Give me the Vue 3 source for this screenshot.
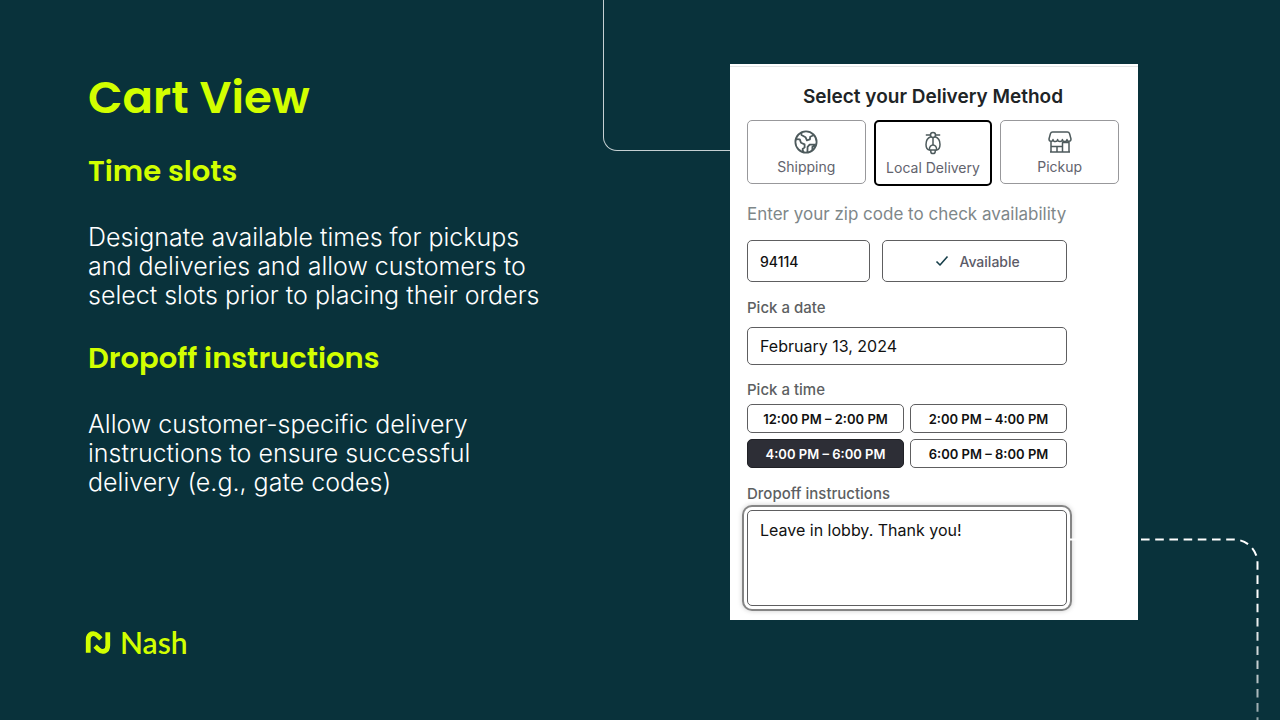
<script setup>
import { ref } from 'vue'

const method = ref('local')
const zip = ref('94114')
const date = ref('February 13, 2024')
const slots = ['12:00 PM – 2:00 PM', '2:00 PM – 4:00 PM', '4:00 PM – 6:00 PM', '6:00 PM – 8:00 PM']
const slot = ref(slots[2])
const notes = ref('Leave in lobby. Thank you!')
</script>

<template>
  <main class="slide">
    <section class="copy">
      <h1>Cart View</h1>
      <h2>Time slots</h2>
      <p>Designate available times for pickups and deliveries and allow customers to select slots prior to placing their orders</p>
      <h2>Dropoff instructions</h2>
      <p class="narrow">Allow customer-specific delivery instructions to ensure successful delivery (e.g., gate codes)</p>
      <div class="brand">
        <svg viewBox="0 0 26 24" width="26" height="23" aria-hidden="true">
          <path d="M2.8 22.6V9C2.8 2.4 8.8 1 12.6 4.8L16 8.2M23.2 1.4V15C23.2 21.6 17.2 23 13.4 19.2L10 15.8" />
        </svg>
        <span>Nash</span>
      </div>
    </section>

    <section class="card">
      <span class="link-line" aria-hidden="true"></span>
      <h3>Select your Delivery Method</h3>
      <div class="methods">
        <button type="button" :class="{ active: method === 'shipping' }" @click="method = 'shipping'">
          <svg viewBox="0 0 24 24" width="24" height="24" aria-hidden="true" stroke-width="1.8">
            <circle cx="12" cy="12" r="10.6" />
            <path d="M7.5 2.6V5l4 2.2 1.4 3.2 3-1 .3-2.6 3.4-1.6M1.6 9.2l4.2.2 1.2 3.4 3.6 1.6v3l-2 1.6.6 3.2M13.4 22.2l.2-5.4 2-2.2h6.2M18.4 20v-3.2l3-1.2" />
          </svg>
          <span>Shipping</span>
        </button>
        <button type="button" :class="{ active: method === 'local' }" @click="method = 'local'">
          <svg viewBox="0 0 24 24" width="24" height="24" aria-hidden="true" stroke-width="1.5">
            <path d="M4.800 4h4.700M14.500 4h4.700M9.800 5.800C6.400 7 5 9.600 5 13.400c0 3.400 1 5.200 3.800 5.600M14.200 5.800C17.600 7 19 9.600 19 13.400c0 3.400-1 5.200-3.800 5.600M12 6.600v7.400" />
            <circle cx="12" cy="4" r="2.500" />
            <path d="M8.400 19c-.6-6.600 7.800-6.600 7.200 0zM9.800 19v1.800c0 2.400 4.400 2.400 4.400 0V19" />
          </svg>
          <span>Local Delivery</span>
        </button>
        <button type="button" :class="{ active: method === 'pickup' }" @click="method = 'pickup'">
          <svg viewBox="0 0 24 24" width="24" height="24" aria-hidden="true" stroke-width="1.5">
            <path d="M4.600 2h14.800c1.200 0 1.800.6 2.200 1.800L23 9c0 3-4 3-4 .6 0 2.600-4.600 2.600-4.600 0 0 2.600-4.800 2.600-4.800 0 0 2.600-4.600 2.600-4.600 0 0 2.400-4 2.400-4-.6l1.400-5.200C2.800 2.600 3.400 2 4.600 2zM3 11.400V22M21 11.400V22M2 22h20M14.500 22v-9.500H21M3 16.500h11.500M9 16.500V22" />
          </svg>
          <span>Pickup</span>
        </button>
      </div>

      <form class="fields" @submit.prevent>
        <label class="hint" for="zip">Enter your zip code to check availability</label>
        <div class="zip-row">
          <input id="zip" v-model="zip" type="text" />
          <button type="button">
            <svg viewBox="0 0 14 14" width="14" height="14" aria-hidden="true" stroke-width="1.6"><path d="M1.500 7.500 5 11l7.500-8.500" /></svg>
            <span>Available</span>
          </button>
        </div>
        <label for="date">Pick a date</label>
        <input id="date" v-model="date" class="date" type="text" />
        <span id="time-label" class="label">Pick a time</span>
        <div class="slots" role="group" aria-labelledby="time-label">
          <button v-for="s in slots" :key="s" type="button" :class="{ chosen: s === slot }" @click="slot = s">{{ s }}</button>
        </div>
        <label for="notes">Dropoff instructions</label>
        <textarea id="notes" v-model="notes"></textarea>
      </form>

      <svg class="dashes" viewBox="0 0 190 184" width="190" height="184" aria-hidden="true">
        <defs>
          <linearGradient id="fade" gradientUnits="userSpaceOnUse" x1="0" y1="60" x2="0" y2="200">
            <stop offset="0" stop-color="#fff" />
            <stop offset="1" stop-color="#fff" stop-opacity=".5" />
          </linearGradient>
        </defs>
        <path d="M0 2.500H164A23.500 23.500 0 0 1 187.500 26V184" stroke="url(#fade)" />
      </svg>
    </section>
  </main>
</template>

<style>
body {
  margin: 0;
  background: #09323b;
}
</style>

<style scoped>
* {
  box-sizing: border-box;
}
.slide {
  display: grid;
  grid-template-columns: minmax(0, 1fr) minmax(320px, 408px);
  gap: 24px;
  align-items: start;
  min-height: 100vh;
  padding: 64px 142px 56px 88px;
  overflow: hidden;
  background: #09323b;
  font-family: Inter, "Liberation Sans", sans-serif;
}
h1, h2, h3, p {
  margin: 0;
}
h1, h2 {
  color: #d2ff00;
  font-family: Poppins, Inter, sans-serif;
}
h1 {
  font-size: 45px;
  font-weight: 600;
  line-height: 68px;
}
h2 {
  margin-top: 18px;
  font-size: 29px;
  font-weight: 600;
  line-height: 42px;
}
p {
  max-width: 464px;
  margin-top: 31px;
  padding-bottom: 9px;
  color: #fff;
  font-size: 25px;
  font-weight: 300;
  line-height: 29px;
}
.narrow {
  max-width: 410px;
}
.brand {
  display: flex;
  align-items: center;
  gap: 9px;
  margin-top: 116px;
  margin-left: -3px;
  color: #d2ff00;
  font-family: Lato, sans-serif;
  font-size: 30px;
  font-weight: 600;
  line-height: 40px;
}
svg {
  flex: none;
  fill: none;
  stroke: currentColor;
  stroke-linejoin: round;
}
.brand svg {
  stroke-width: 5;
  stroke-linejoin: miter;
}
.card {
  position: relative;
  padding: 19px 19px 14px 17px;
  background: linear-gradient(#fff 2px, #e4e6e6 2px, #e4e6e6 3px, #fff 3px);
}
h3 {
  color: #202426;
  font-size: 19px;
  font-weight: 600;
  line-height: 28px;
  text-align: center;
}
button, input, textarea {
  display: block;
  width: 100%;
  margin: 0;
  border: 1px solid #5e5e60;
  border-radius: 5px;
  background: #fff;
  color: #111;
  font-family: inherit;
}
button {
  padding: 0;
  cursor: pointer;
}
.methods {
  display: grid;
  grid-template-columns: repeat(3, 1fr);
  align-items: start;
  gap: 8px;
  margin-top: 9px;
}
.methods button {
  display: flex;
  flex-direction: column;
  align-items: center;
  gap: 3px;
  height: 64px;
  padding-top: 9px;
  border-color: #98989b;
  color: #62636d;
  font-size: 14px;
  line-height: 20px;
}
.methods .active {
  height: 66px;
  border: 2px solid #000;
}
.methods svg {
  color: #4d5a5c;
}
.fields {
  margin-right: 52px;
}
label, .label {
  display: block;
  color: #5d5f62;
  font-size: 15px;
  font-weight: 500;
  line-height: 20px;
}
.hint {
  margin-top: 18px;
  color: #7e8789;
  font-size: 17px;
  font-weight: 400;
}
input {
  padding: 0 12px;
  font-size: 14px;
}
.zip-row {
  display: grid;
  grid-template-columns: 2fr 3fr;
  gap: 12px;
  margin: 16px 0;
}
.zip-row input, .zip-row button {
  height: 42px;
}
.zip-row input {
  font-weight: 500;
}
.zip-row button {
  display: flex;
  align-items: center;
  justify-content: center;
  gap: 10px;
  padding-left: 6px;
  color: #5b5b68;
  font-size: 14px;
  font-weight: 500;
}
.zip-row svg {
  color: #173f4a;
}
.date {
  height: 38px;
  margin: 9px 0 15px;
  font-size: 16px;
}
.slots {
  display: grid;
  grid-template-columns: 1fr 1fr;
  gap: 6px;
  margin: 4px 0 16px;
}
.slots button {
  height: 29px;
  font-size: 13px;
  font-weight: 600;
}
.slots .chosen {
  border-color: #202126;
  background: #2d2e36;
  color: #fff;
}
textarea {
  height: 96px;
  margin-top: 6px;
  padding: 9px 12px;
  box-shadow: 0 0 0 3px #fff, 0 0 0 5px #858585, 0 0 5px 5px #ccc;
  font-size: 16px;
  line-height: 20px;
  resize: none;
}
.link-line {
  position: absolute;
  top: -64px;
  right: 100%;
  width: 127px;
  height: 151px;
  border: solid #c5d0d2;
  border-width: 0 0 1px 1px;
  border-radius: 0 0 0 14px;
}
.dashes {
  position: absolute;
  top: 473px;
  left: 340px;
  stroke-width: 2;
  stroke-dasharray: 8.6 5.6;
  pointer-events: none;
}
</style>
